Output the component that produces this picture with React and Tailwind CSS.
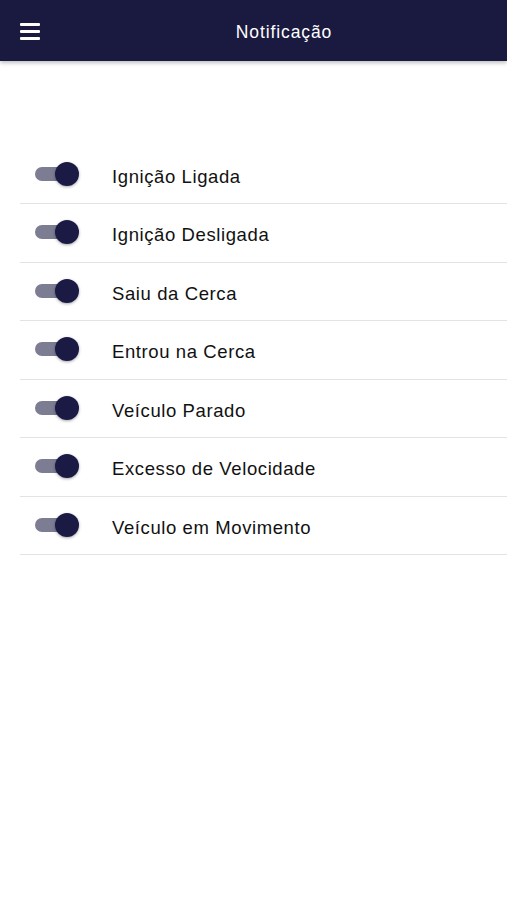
import React, { useState } from "react";

const items = [
  "Ignição Ligada",
  "Ignição Desligada",
  "Saiu da Cerca",
  "Entrou na Cerca",
  "Veículo Parado",
  "Excesso de Velocidade",
  "Veículo em Movimento",
];

function Toggle({ on, onClick }) {
  return (
    <button onClick={onClick} className="relative w-[44px] h-[26px] shrink-0 flex items-center">
      <span className={"absolute left-0 right-[2px] h-[14px] rounded-full " + (on ? "bg-[#7c7c93]" : "bg-[#b8b8b8]")} />
      <span
        className={
          "absolute top-[1px] w-[24px] h-[24px] rounded-full shadow-[0_1px_3px_rgba(0,0,0,0.35)] " +
          (on ? "left-[20px] bg-[#1a1a45]" : "left-0 bg-[#f1f1f1]")
        }
      />
    </button>
  );
}

export default function App() {
  const [state, setState] = useState(items.map(() => true));
  return (
    <div className="w-[507px] h-[900px] bg-white overflow-hidden" style={{ fontFamily: '"Helvetica Neue", "Liberation Sans", Arial, sans-serif' }}>
      <div className="h-[61px] bg-[#1a1a40] flex items-center relative shadow-[0_2px_4px_rgba(0,0,0,0.25)] z-10">
        <div className="absolute left-[20px] top-[23px] w-[20px] flex flex-col gap-[4px]">
          <span className="block h-[3px] bg-white rounded-[1px]" />
          <span className="block h-[3px] bg-white rounded-[1px]" />
          <span className="block h-[3px] bg-white rounded-[1px]" />
        </div>
        <div className="flex-1 pl-[61px] pt-[4px] text-center text-white text-[17.5px] tracking-[0.9px]">Notificação</div>
      </div>
      <div className="mt-[84.5px] ml-[20px]">
        {items.map((t, i) => (
          <div key={t} className="h-[58.5px] flex items-center border-b border-[#e3e3e3]">
            <div className="ml-[15px] -mt-[1px]">
              <Toggle on={state[i]} onClick={() => setState(s => s.map((v, j) => (j === i ? !v : v)))} />
            </div>
            <span className="ml-[33px] pt-[5px] text-[18.5px] tracking-[0.6px] text-[#111]">{t}</span>
          </div>
        ))}
      </div>
    </div>
  );
}
